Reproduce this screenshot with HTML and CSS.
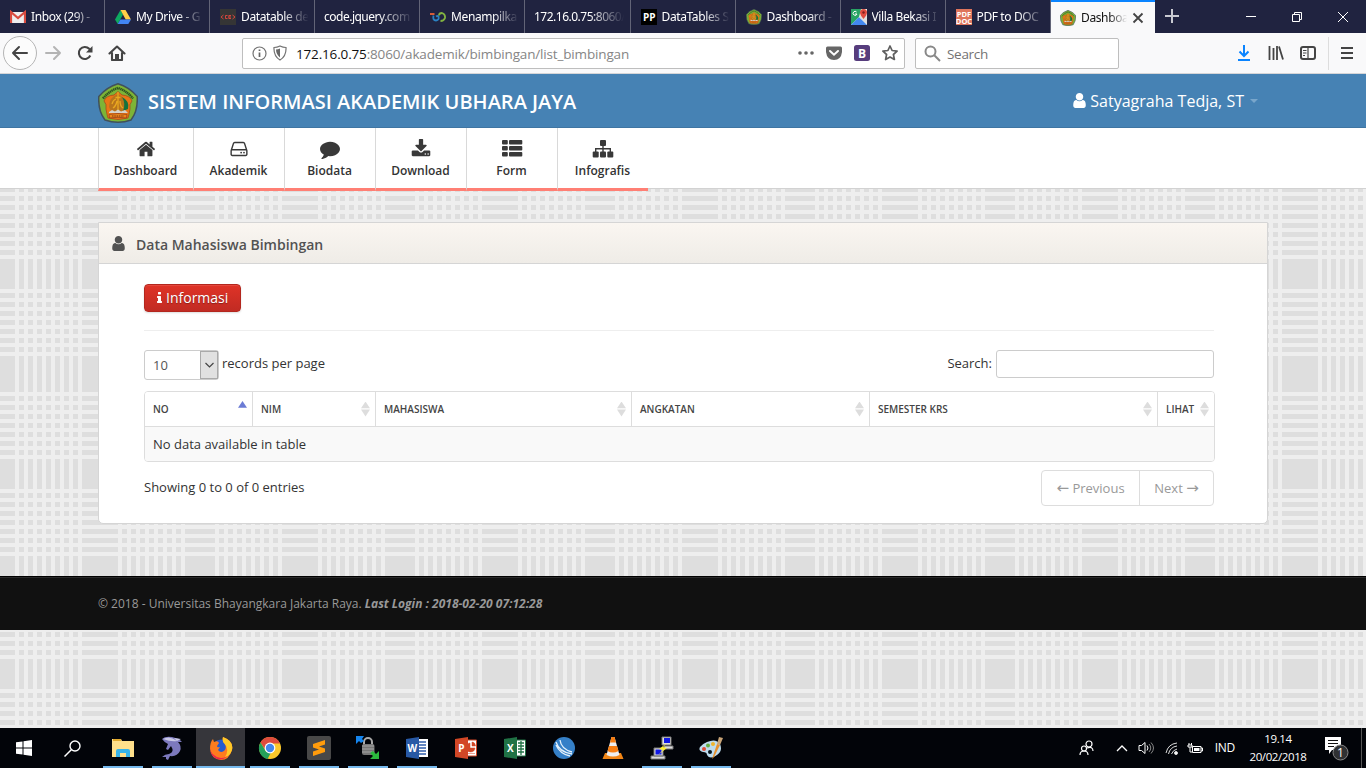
FILE: index.html
```html
<!DOCTYPE html>
<html lang="id">
<head>
<meta charset="utf-8">
<title>Dashboard</title>
<link rel="stylesheet" href="styles.css">
</head>
<body>
<svg class="defs" aria-hidden="true">
  <symbol id="crest" viewBox="0 0 40 40">
    <path d="M20 .8Q31 4 39.200 13.500Q40 28 33 37Q20 41.500 7 37Q0 28 .8 13.500Q9 4 20 .8Z" fill="#7db436" stroke="#41515b" stroke-width="1.500"/>
    <path d="M5 15.500Q11 8 20 5Q29 8 35 15.500" fill="none" stroke="#2d5322" stroke-width="2.400" stroke-dasharray="1.400 .5"/>
    <path d="M20 8.500L24 12Q32 12.500 34 18Q31 21 32 26Q31 32 30 35Q20 38 10 35Q9 32 8 26Q9 21 6 18Q8 12.500 16 12Z" fill="#e87616" stroke="#a6401b" stroke-width=".7"/>
    <path d="M20 11Q11 14 11 24Q13 30 20 30Q28 30 28 23Q27 14 20 11Z" fill="#b8741c"/>
    <path d="M24 14Q32 18 30 26L25 28Q28 21 24 14Z" fill="#16723c"/>
    <path d="M20 9V27M17.500 14.500H22.500M14 21Q15 17 18 16M15 25Q18 23 19 18M22 18Q22 23 25 25" fill="none" stroke="#e9a820" stroke-width="1.300"/>
    <path d="M11 29L14 27L17 28.500L20 26.500L23 28.500L27 27L30 30H11Z" fill="#d6d2c9"/>
    <path d="M11 31.500Q20 29.500 29 31.500L28.500 35Q20 33.500 11.500 35Z" fill="#ec8619" stroke="#98401c" stroke-width=".8"/>
    <path d="M14 33H26" stroke="#7d3416" stroke-width="1.200" stroke-dasharray="1.500 .8"/>
  </symbol>
  <symbol id="user" viewBox="256 128 1280 1536"><path d="M1536 1399q0 109-62.500 187t-150.500 78h-854q-88 0-150.500-78t-62.500-187q0-85 8.500-160.500t31.500-152 58.500-131 94-89 134.500-34.500q131 128 313 128t313-128q76 0 134.500 34.500t94 89 58.500 131 31.500 152 8.500 160.500zm-256-887q0 159-112.500 271.500t-271.500 112.500-271.500-112.500-112.500-271.500 112.500-271.500 271.500-112.500 271.500 112.500 112.500 271.500z"/></symbol>
  <symbol id="loop" viewBox="0 0 16 16"><path d="M0 5H4.500" stroke="#ed6438" stroke-width="1.800"/><path d="M3.500 6.500Q2.500 11.500 6 11.500Q9.500 11 8.500 7.500Q7.500 6.500 6 7.500" fill="none" stroke="#2b82c3" stroke-width="1.800"/><path d="M9 6.500Q9 4 12 4Q15.500 5 15 9Q14 12 10.500 12" fill="none" stroke="#82b341" stroke-width="1.800"/></symbol>
</svg>

<div class="tabs">
  <div class="tab"><svg viewBox="0 0 16 16"><path d="M1 3h14v11H1z" fill="#eee"/><path d="M1 14V3l7 6 7-6v11" fill="none" stroke="#d84b3f" stroke-width="2.200"/></svg><span>Inbox (29) -</span></div>
  <div class="tab"><svg viewBox="0 0 16 16"><path d="M5.500 1L0 10.500 2.700 15 8 5.500z" fill="#0da960"/><path d="M5.500 1h5L16 10.500h-5.300z" fill="#ffcf48"/><path d="M5.300 10.500H16L13.300 15H2.700z" fill="#4285f4"/></svg><span>My Drive - G</span></div>
  <div class="tab"><svg viewBox="0 0 16 16"><path d="M0 0h16v16H0z" fill="#353535"/><path d="M3.500 6L1 8l2.500 2M12.500 6L15 8l-2.500 2M7.500 6.500H5.500v3h2M11 6.500H8.800v3H11M9 8h2" fill="none" stroke="#d2463e"/></svg><span>Datatable de</span></div>
  <div class="tab noicon"><span>code.jquery.com</span></div>
  <div class="tab"><svg><use href="#loop"/></svg><span>Menampilka</span></div>
  <div class="tab noicon wide"><span>172.16.0.75:8060/</span></div>
  <div class="tab"><svg viewBox="0 0 16 16"><path d="M0 0h16v16H0z" fill="#000"/><text x="8.200" y="12" text-anchor="middle" class="pp">PP</text></svg><span>DataTables S</span></div>
  <div class="tab"><svg><use href="#crest"/></svg><span>Dashboard -</span></div>
  <div class="tab"><svg viewBox="0 0 16 16"><path d="M0 0h16v16H0z" fill="#f1f0e7"/><path d="M0 0h10L8 8l-8 8z" fill="#28a464"/><path d="M0 16L8 8l8 8z" fill="#4388ef"/><path d="M8 8l5-5 3 3v9z" fill="#ddd"/><path d="M12.500 10Q9 6 9 3.500a3.500 3.500 0 0 1 7 0Q16 6 12.500 10Z" fill="#df4b40"/><circle cx="12.500" cy="3.500" r="1.200" fill="#7d2020"/><path d="M5.600 3A2 2 0 1 0 6 5H4" fill="none" stroke="#fff"/></svg><span>Villa Bekasi I</span></div>
  <div class="tab wide"><svg viewBox="0 0 16 16"><path d="M0 0h16v16H0z" fill="#df755c"/><text x="8" y="7.500" text-anchor="middle" class="pdf">PDF</text><text x="8" y="15" text-anchor="middle" class="pdf">DOC</text></svg><span>PDF to DOC</span></div>
  <div class="tab active"><svg><use href="#crest"/></svg><span>Dashboa</span><svg class="close" viewBox="0 0 12 12"><path d="M1.500 1.500l9 9m0-9l-9 9" stroke="#444" stroke-width="1.800"/></svg></div>
  <svg class="plus" viewBox="0 0 16 16"><path d="M8 1v14M1 8h14" stroke="#c9cad2" stroke-width="2"/></svg>
  <div class="window-buttons">
    <svg viewBox="0 0 12 12"><path d="M1 5.500h10" stroke="#fff"/></svg>
    <svg viewBox="0 0 12 12"><path d="M1.500 3.500h7v7h-7zM3.500 3V1.500h7v7H9" fill="none" stroke="#fff"/></svg>
    <svg viewBox="0 0 12 12"><path d="M1 1l10 10m0-10L1 11" stroke="#fff"/></svg>
  </div>
</div>

<div class="toolbar">
  <div class="back"><svg width="18" height="16" viewBox="0 0 18 16" fill="none" stroke="#444" stroke-width="2" stroke-linecap="round" stroke-linejoin="round"><path d="M16 8H2m6-6L2 8l6 6"/></svg></div>
  <svg class="fwd" width="18" height="16" viewBox="0 0 18 16" fill="none" stroke="#b4b4b4" stroke-width="2" stroke-linecap="round" stroke-linejoin="round"><path d="M2 8h14m-6-6l6 6-6 6"/></svg>
  <svg class="reload" width="16" height="16" viewBox="0 0 16 16"><path d="M13.300 10.500A6 6 0 1 1 12.200 3.800L14 5.500" fill="none" stroke="#444" stroke-width="2.100"/><path d="M15.500 1v6.500H9z" fill="#444"/></svg>
  <svg class="home" width="18" height="16" viewBox="0 0 18 16"><path d="M1.500 8.500L9 1.500l7.500 7M4 8v7h10V8" fill="none" stroke="#444" stroke-width="2.100" stroke-linejoin="round" stroke-linecap="round"/><path d="M7 9h4v6H7z" fill="#444"/></svg>
  <div class="url">
    <svg width="15" height="15" viewBox="0 0 15 15"><circle cx="7.500" cy="7.500" r="6.500" fill="none" stroke="#737373" stroke-width="1.200"/><path d="M7.500 6.500V11M7.500 3.600v1.500" stroke="#666" stroke-width="1.700"/></svg>
    <svg class="shield" width="14" height="16" viewBox="0 0 14 16"><path d="M7 1Q10 2.500 13 2.500Q13.500 11 7 15Q.5 11 1 2.500Q4 2.500 7 1Z" fill="none" stroke="#737373" stroke-width="1.200"/><path d="M7 3.500V12.500Q3 9 3 4.500Q5 4.500 7 3.500Z" fill="#686868"/></svg>
    <span class="address"><b>172.16.0.75</b>:8060/akademik/bimbingan/list_bimbingan</span>
    <svg width="16" height="16" viewBox="0 0 16 16" fill="#666"><circle cx="2" cy="8" r="1.800"/><circle cx="8" cy="8" r="1.800"/><circle cx="14" cy="8" r="1.800"/></svg>
    <svg width="16" height="16" viewBox="0 0 16 16"><path d="M1.500 1.500h13Q16 1.500 16 3v4Q15 15 8 15Q1 15 0 7V3Q0 1.500 1.500 1.500Z" fill="#666"/><path d="M4 6l4 3.700L12 6" fill="none" stroke="#fff" stroke-width="2" stroke-linecap="round"/></svg>
    <svg width="16" height="16" viewBox="0 0 16 16"><rect width="16" height="16" rx="2.500" fill="#573d7d"/><text x="8" y="12.500" text-anchor="middle" class="bs">B</text></svg>
    <svg width="16" height="16" viewBox="0 0 16 16"><path d="M8 1l2.100 4.500 5 .6-3.700 3.400 1 5L8 12l-4.400 2.500 1-5L.9 6.100l5-.6z" fill="none" stroke="#5f5f5f" stroke-width="1.700" stroke-linejoin="round"/></svg>
  </div>
  <div class="search-box"><svg width="17" height="17" viewBox="0 0 17 17"><circle cx="6.500" cy="6.500" r="5" fill="none" stroke="#888" stroke-width="2"/><path d="M10.300 10.300L16 16" stroke="#888" stroke-width="2"/></svg><span>Search</span></div>
  <div class="tools">
    <svg width="14" height="16" viewBox="0 0 14 16"><path d="M7 0v11M2.500 6.500L7 11l4.500-4.500M1 15h12" fill="none" stroke="#0a84ff" stroke-width="2"/></svg>
    <svg width="16" height="16" viewBox="0 0 16 16"><path d="M1.500 1v14M5.500 3v12M9 1v14M11 1.500L15 14.500" stroke="#444" stroke-width="1.800" fill="none"/></svg>
    <svg width="16" height="16" viewBox="0 0 16 16"><rect x="1" y="2" width="14" height="12" rx="2" fill="none" stroke="#444" stroke-width="2"/><path d="M8 2v12M3 5.500h3.500M3 8h3.500M3 10.500h2" stroke="#444" stroke-width="1.200"/></svg>
    <i></i>
    <svg width="12" height="16" viewBox="0 0 12 16"><path d="M0 3h12M0 8h12M0 13h12" stroke="#444" stroke-width="2"/></svg>
  </div>
</div>

<div class="page">
  <header class="navbar"><div class="container navbar-inner">
    <svg class="logo"><use href="#crest"/></svg><h1>SISTEM INFORMASI AKADEMIK UBHARA JAYA</h1>
    <div class="account"><svg><use href="#user"/></svg>Satyagraha Tedja, ST<i class="caret"></i></div>
  </div></header>
  <nav class="subnav"><ul class="container">
    <li class="first"><svg viewBox="0 0 1792 1792"><path d="M1472 992v480q0 26-19 45t-45 19h-384v-384h-256v384h-384q-26 0-45-19t-19-45v-480q0-1 .5-3t.5-3l575-474 575 474q1 2 1 6zm223-69l-62 74q-8 9-21 11h-3q-13 0-21-7l-692-577-692 577q-12 8-24 7-13-2-21-11l-62-74q-8-10-7-23.500t11-21.500l719-599q32-26 76-26t76 26l244 204v-195q0-14 9-23t23-9h192q14 0 23 9t9 23v408l219 182q10 8 11 21.500t-7 23.500z"/></svg>Dashboard</li>
    <li><svg viewBox="0 0 1792 1792"><path d="M1168 1216q0 33-23.500 56.500t-56.500 23.500-56.500-23.500-23.500-56.500 23.500-56.500 56.500-23.500 56.500 23.500 23.500 56.500zm256 0q0 33-23.500 56.500t-56.500 23.500-56.500-23.500-23.500-56.500 23.500-56.500 56.500-23.500 56.500 23.500 23.500 56.500zm112 160v-320q0-13-9.500-22.500t-22.500-9.500h-1216q-13 0-22.500 9.500t-9.500 22.500v320q0 13 9.500 22.500t22.500 9.500h1216q13 0 22.500-9.500t9.500-22.500zm-1230-480h1180l-157-482q-4-13-16-21.500t-26-8.500h-782q-14 0-26 8.500t-16 21.500zm1358 160v320q0 66-47 113t-113 47h-1216q-66 0-113-47t-47-113v-320q0-25 16-75l197-606q17-53 63-86t101-33h782q55 0 101 33t63 86l197 606q16 50 16 75z"/></svg>Akademik</li>
    <li><svg viewBox="0 0 1792 1792"><path d="M1792 896q0 174-120 321.500t-326 233-450 85.500q-70 0-145-8-198 175-460 242-49 14-114 22-17 2-30.500-9t-17.500-29v-1q-3-4-.5-12t2-10 4.500-9.500l6-9 7-8.500 8-9q7-8 31-34.500t34.500-38 31-39.500 32.500-51 27-59 26-76q-157-89-247.500-220t-90.500-281q0-130 71-248.500t191-204.500 286-136.500 348-50.500q244 0 450 85.500t326 233 120 321.500z"/></svg>Biodata</li>
    <li><svg viewBox="0 0 1792 1792"><path d="M1344 1344q0-26-19-45t-45-19-45 19-19 45 19 45 45 19 45-19 19-45zm256 0q0-26-19-45t-45-19-45 19-19 45 19 45 45 19 45-19 19-45zm128-224v320q0 40-28 68t-68 28h-1472q-40 0-68-28t-28-68v-320q0-40 28-68t68-28h465l135 136q58 56 136 56t136-56l136-136h464q40 0 68 28t28 68zm-325-569q17 41-14 70l-448 448q-18 19-45 19t-45-19l-448-448q-31-29-14-70 17-39 59-39h256v-448q0-26 19-45t45-19h256q26 0 45 19t19 45v448h256q42 0 59 39z"/></svg>Download</li>
    <li><svg viewBox="0 0 20 20"><g><rect y="1" width="5.800" height="4.500" rx="1"/><rect y="7" width="5.800" height="4.500" rx="1"/><rect y="13" width="5.800" height="4.500" rx="1"/><rect x="7" y="1" width="13.300" height="4.500" rx="1"/><rect x="7" y="7" width="13.300" height="4.500" rx="1"/><rect x="7" y="13" width="13.300" height="4.500" rx="1"/></g></svg>Form</li>
    <li><svg viewBox="0 0 20 20"><rect x="7" y="1" width="6" height="6" rx="1"/><rect x="-.3" y="12.500" width="6" height="6" rx="1"/><rect x="7" y="12.500" width="6" height="6" rx="1"/><rect x="14.300" y="12.500" width="6" height="6" rx="1"/><path d="M10 6v7M2.700 13V9.700h14.600V13" fill="none" stroke="#393939" stroke-width="1.400"/></svg>Infografis</li>
  </ul></nav>

  <main class="container">
    <section class="widget">
      <h3><svg><use href="#user"/></svg>Data Mahasiswa Bimbingan</h3>
      <div class="content">
        <button class="info"><svg viewBox="576 128 640 1408"><path d="M1216 1344v128q0 26-19 45t-45 19h-512q-26 0-45-19t-19-45v-128q0-26 19-45t45-19h64v-384h-64q-26 0-45-19t-19-45v-128q0-26 19-45t45-19h384q26 0 45 19t19 45v576h64q26 0 45 19t19 45zm-128-1152v192q0 26-19 45t-45 19h-256q-26 0-45-19t-19-45v-192q0-26 19-45t45-19h256q26 0 45 19t19 45z"/></svg>Informasi</button>
        <hr>
        <div class="controls">
          <div class="length"><div class="select">10<i><svg width="9" height="6" viewBox="0 0 9 6"><path d="M.5 1l4 4 4-4" fill="none" stroke="#444" stroke-width="1.200"/></svg></i></div>records per page</div>
          <label>Search:<input type="text"></label>
        </div>
        <div class="table">
          <div class="head">
            <span class="asc">NO<i></i></span><span>NIM<i></i></span><span>MAHASISWA<i></i></span><span>ANGKATAN<i></i></span><span>SEMESTER KRS<i></i></span><span>LIHAT<i></i></span>
          </div>
          <div class="empty">No data available in table</div>
        </div>
        <div class="bottom"><span>Showing 0 to 0 of 0 entries</span><div class="pager"><span class="prev"><em>←</em> Previous</span><span>Next <em>→</em></span></div></div>
      </div>
    </section>
  </main>
  <footer><div class="container">© 2018 - Universitas Bhayangkara Jakarta Raya. <b>Last Login : 2018-02-20 07:12:28</b></div></footer>
</div>

<div class="taskbar">
  <div class="start"><svg width="16" height="16" viewBox="0 0 16 16" fill="#fff"><path d="M0 2.300L6.500 1.400V7.500H0zM7.500 1.200L16 0v7.500H7.500zM0 8.500h6.500v6.100L0 13.700zM7.500 8.500H16V16l-8.500-1.200z"/></svg></div>
  <div class="start"><svg width="17" height="17" viewBox="0 0 17 17"><circle cx="11" cy="6" r="5" fill="none" stroke="#fff" stroke-width="1.400"/><path d="M7.500 9.500L.5 16.500" stroke="#fff" stroke-width="1.500"/></svg></div>
  <div class="apps">
    <div class="app on"><svg viewBox="0 0 24 24"><path d="M1 3h9l1 2h12v16H1z" fill="#ffe08b"/><path d="M2 3h8v2H2z" fill="#e2aa2e"/><path d="M5 21v-6q0-2 2-2h10q2 0 2 2v6h-4v-4H9v4z" fill="#38b3e8"/></svg></div>
    <div class="app on"><svg viewBox="0 0 24 24"><path d="M2 3Q5 0 12 1L19 3 22 6 18 6Q22 10 20 15Q17 21 10 20L8 24 6 23 6 21 2 21Q5 18 9 18Q15 16 11 10L8 14 6 13 8 8Q4 6 2 3Z" fill="#7c79bd"/><path d="M3 3Q10 -1 17 5Q11 6 3 3M14 2l7 1-4 2z" fill="#c9c9e6"/></svg></div>
    <div class="app on current"><svg viewBox="0 0 24 24"><circle cx="12" cy="12.500" r="9" fill="#245bd0"/><path d="M14 1Q25 5 23 14Q20 24 12 24Q2 23 1 13Q1 6 4 3L5 6Q9 4 10 7L8 10Q8 12 11 11L9 14Q12 18 16 14Q18 10 15 7Q13 5 14 1Z" fill="#ff7c1e"/><path d="M14 1Q25 5 23 14Q21 20 16 21Q21 13 15 7Q13 5 14 1Z" fill="#ffc928"/><path d="M1 11Q1 20 12 22Q18 22 20 18Q16 25 8 23Q1 20 1 11Z" fill="#ed2748"/></svg></div>
    <div class="app on"><svg viewBox="0 0 24 24"><circle cx="12" cy="12" r="11" fill="#fbc82b"/><path d="M2.500 6.500A11 11 0 0 1 22 7.500H12L7.500 14z" fill="#de4b3d"/><path d="M2.500 6.500L8 15.500l5 1L9.500 23A11 11 0 0 1 2.500 6.500Z" fill="#24a05a"/><circle cx="12" cy="12" r="5.400" fill="#fff"/><circle cx="12" cy="12" r="4.200" fill="#4387ed"/></svg></div>
    <div class="app on"><svg viewBox="0 0 24 24"><rect width="24" height="24" rx="2" fill="#484848"/><path d="M6 8l12-4v4.500l-6 2 6 2V16L6 20v-4.500l6-2-6-2z" fill="#ff9c0c"/></svg></div>
    <div class="app on"><svg viewBox="0 0 24 24"><path d="M8 9V6a4 4 0 0 1 8 0v3" fill="none" stroke="#aaa" stroke-width="2"/><rect x="6" y="8" width="12.500" height="11" rx="2" fill="#777"/><path d="M6 10h12M6 13h12M6 16h12" stroke="#a6a6a6"/><path d="M0 0h8L6 3l2 2-3 2-2-2-3 3z" fill="#1585ee"/><path d="M23 23h-9l3-3-3-3 3-2 3 3 3-3z" fill="#2bba3d"/></svg></div>
    <div class="app on"><svg viewBox="0 0 24 24"><path d="M12 3h11v18H12z" fill="#fff"/><path d="M14 6h7M14 9h7M14 12h7M14 15h7M14 18h7" stroke="#315daa" stroke-width="1.300"/><path d="M1 3l13-2v22L1 21z" fill="#2859a5"/><text x="7.300" y="16" text-anchor="middle" class="office">W</text></svg></div>
    <div class="app"><svg viewBox="0 0 24 24"><path d="M12 4h10.500v16H12z" fill="#fff" stroke="#d24726"/><path d="M16 7v5h5a4.500 4.500 0 1 1-5-5M18 6v4h3.500Q21 6 18 6M14 17.500h7" fill="#d24726" stroke="#d24726" stroke-width=".5"/><path d="M1 3l13-2v22L1 21z" fill="#d24726"/><text x="7.300" y="16" text-anchor="middle" class="office">P</text></svg></div>
    <div class="app"><svg viewBox="0 0 24 24"><path d="M12 4h10.500v16H12z" fill="#fff" stroke="#207245"/><path d="M15 7h6M15 10h6M15 13h6M15 16h6M18 5v14" stroke="#207245" stroke-width="1.300"/><path d="M1 3l13-2v22L1 21z" fill="#207245"/><text x="7.300" y="16" text-anchor="middle" class="office">X</text></svg></div>
    <div class="app"><svg viewBox="0 0 24 24"><circle cx="12" cy="12" r="11" fill="#3580c8"/><path d="M4 6Q7 16 20 18M8 4Q9 13 20 16M4 9Q8 18 18 20" fill="none" stroke="#e4f1fb" stroke-width="1.300"/></svg></div>
    <div class="app"><svg viewBox="0 0 24 24"><path d="M4 17h16l2.500 6h-21z" fill="#f18515"/><path d="M10.500 1h3l5 18q-6.500 3-13 0z" fill="#eee"/><path d="M10.500 1h3l1.500 5.500H9zM8 10h8l1.500 5Q12 18 6.500 15z" fill="#f77d10"/></svg></div>
    <div class="app on"><svg viewBox="0 0 24 24"><g stroke="#777" fill="#ddd"><path d="M12 1h9v8h-9zM14 10h9v3h-9zM4 12h9v8H4zM1 20h14v3H1z"/></g><path d="M14 2h6v5h-6zM5.500 13.500h6v5h-6z" fill="#1018e4"/><path d="M17 7l-8 6 4 1-5 5 9-7-4-1z" fill="#fff035"/></svg></div>
    <div class="app on"><svg viewBox="0 0 24 24"><path d="M8 6Q17 2 21 8Q24 15 18 19Q11 24 8 19Q8 16 4 16Q-1 15 1 11Q3 8 8 6Z" fill="#bddbed"/><circle cx="11" cy="16" r="2" fill="#07131c"/><circle cx="5" cy="13" r="2" fill="#de4d39"/><circle cx="9" cy="9.500" r="2" fill="#64ae43"/><circle cx="14" cy="8" r="2" fill="#f0b42c"/><path d="M13 23L18 8l3 1-6 12z" fill="#e9902b"/><path d="M18 8l2-7 4 1-3 7z" fill="#c9a477"/></svg></div>
  </div>
  <div class="tray">
    <svg width="15" height="16" viewBox="0 0 15 16" fill="none" stroke="#fff" stroke-width="1.200"><circle cx="10" cy="4" r="3"/><circle cx="5" cy="8.500" r="2.500"/><path d="M1 15q0-4 4-4t4 4M8 8q6-2 6 3"/></svg>
    <svg class="chevron" width="12" height="8" viewBox="0 0 12 8"><path d="M1 7l5-5 5 5" fill="none" stroke="#fff" stroke-width="1.300"/></svg>
    <svg class="sound" width="17" height="14" viewBox="0 0 17 14" fill="none" stroke="#fff"><path d="M1 4.500h2.500L7 1.500v11L3.500 9.500H1z"/><path d="M9 4.500q2 2.500 0 5"/><path d="M11 3q3.500 4 0 8M13 1.500q5 5.500 0 11" stroke="#888"/></svg>
    <svg class="wifi" width="13" height="13" viewBox="0 0 13 13" fill="none" stroke="#ddd"><path d="M1 11Q3 2 12 1M3.500 12Q5 5 12 4M6.500 12Q8 8 12 7"/><circle cx="11" cy="11" r="1.500" fill="#fff"/></svg>
    <svg class="battery" width="16" height="13" viewBox="0 0 16 13"><path d="M5.500 4.500h8.500v6H5.500zM14 6h1.500v3H14" fill="none" stroke="#fff"/><path d="M7 6h5.500v3H7z" fill="#fff"/><path d="M1 3h4v2H1zM2 1v2M4.500 1v2M3 5v5h2" fill="none" stroke="#fff"/></svg>
    <span class="lang">IND</span>
    <div class="clock"><span>19.14</span><span>20/02/2018</span></div>
    <svg class="notice" width="25" height="25" viewBox="0 0 25 25"><path d="M1 1h16v13H8l-3 4v-4H1z" fill="#fff"/><path d="M4 4.500h10M4 7.500h10M4 10.500h6" stroke="#111"/><circle cx="16.500" cy="16.500" r="7.500" fill="#303133" stroke="#888"/><text x="16.500" y="21" text-anchor="middle" class="badge">1</text></svg>
  </div>
</div>
</body>
</html>
```
FILE: styles.css
```css
*{box-sizing:border-box}
body{margin:0;width:1366px;height:768px;overflow:hidden;display:flex;flex-direction:column;font-family:"Open Sans",sans-serif;font-size:13px;line-height:18px;color:#333}
svg{display:block;flex:none}
.defs{position:absolute;width:0;height:0}
.tabs{height:33px;background:#202340;display:flex;flex:none;color:#fff;font-family:"Noto Sans","Open Sans",sans-serif;font-size:12px;letter-spacing:-.35px}
.tab{width:105px;border-right:1px solid #626477;display:flex;align-items:center;padding:0 4px 0 10px;white-space:nowrap}
.tab.noicon{padding-left:9px}
.tab.noicon span{letter-spacing:-.5px}
.tab.wide{width:105.500px}
.tab svg{width:16px;height:16px;margin-right:5px}
.tab span{flex:1;min-width:0;overflow:visible;-webkit-mask-image:linear-gradient(90deg,#000 60%,transparent 98%);mask-image:linear-gradient(90deg,#000 60%,transparent 98%)}
.tab:not(.noicon) span{letter-spacing:-.38px}
.tab.active{background:#f9f9fa;color:#111;border-top:2px solid #0a84ff;border-right:0;padding-left:9px;width:104px}
.tab.active .close{width:12px;height:12px;margin:0 7px 0 4px}
.pp{font:bold 10px "Open Sans",sans-serif;fill:#fff;letter-spacing:0}
.pdf{font:bold 7.500px "Open Sans",sans-serif;fill:#fff;letter-spacing:0}
.plus{width:16px;height:16px;margin:8px 0 0 9px}
.window-buttons{display:flex;gap:34px;margin:11px 17px 0 auto}
.window-buttons svg{width:12px;height:12px}
.toolbar{height:41px;background:#f9f9fa;border-bottom:1px solid #d5d5d7;display:flex;align-items:center;flex:none;padding:0 13px 0 3px}
.back{width:34px;height:34px;border:1px solid #b5b5b5;border-radius:50%;display:grid;place-items:center;background:#fcfcfc}
.fwd{margin-left:7px}
.reload{margin-left:15px}
.home{margin-left:15px}
.url,.search-box{height:31px;border:1px solid #bebebe;border-radius:2px;background:#fff;display:flex;align-items:center;font-size:14px}
.url{width:663px;margin-left:116px;padding:0 6px 0 9px;gap:12px}
.shield{margin-left:-6px}
.address{flex:1;margin-left:-3px;color:#858585;font-size:13.500px;letter-spacing:-.16px;white-space:nowrap;padding-top:2px}
.address b{font-weight:400;color:#111}
.bs{font:bold 12px "Open Sans",sans-serif;fill:#fff}
.search-box{width:204px;margin-left:10px;padding-left:8px;gap:6px;color:#737373;font-size:13.500px;letter-spacing:-.3px}
.search-box span{padding-top:2px}
.tools{display:flex;align-items:center;margin-left:auto;gap:16px}
.tools svg:first-child{margin-right:1px}
.tools i{width:1px;height:33px;background:#ddd;margin:0 -4px 0 -4px}
.page{height:654px;flex:none;background-color:#dedede;
 background-image:linear-gradient(90deg,transparent 15px,#eee 15px 19px,transparent 19px 24px,#eee 24px 28px,transparent 28px 33px,#eee 33px 37px,transparent 37px 42px,#eee 42px 46px,transparent 46px 51px,#eee 51px 55px,transparent 55px 60px,#eee 60px 64px,transparent 64px 69px,#eee 69px 73px,transparent 73px 78px,#eee 78px 82px,transparent 82px 118px,#eee 118px 122px,transparent 122px 127px,#eee 127px 131px,transparent 131px 136px,#eee 136px 140px,transparent 140px 145px,#eee 145px 149px,transparent 149px 154px,#eee 154px 158px,transparent 158px 163px,#eee 163px 167px,transparent 167px 172px,#eee 172px 176px,transparent 176px 181px,#eee 181px 185px,transparent 185px),
 linear-gradient(180deg,transparent 15px,#eee 15px 19px,transparent 19px 24px,#eee 24px 28px,transparent 28px 33px,#eee 33px 37px,transparent 37px 42px,#eee 42px 46px,transparent 46px 51px,#eee 51px 55px,transparent 55px 60px,#eee 60px 64px,transparent 64px 69px,#eee 69px 73px,transparent 73px 78px,#eee 78px 82px,transparent 82px 118px,#eee 118px 122px,transparent 122px 127px,#eee 127px 131px,transparent 131px 136px,#eee 136px 140px,transparent 140px 145px,#eee 145px 149px,transparent 149px 154px,#eee 154px 158px,transparent 158px 163px,#eee 163px 167px,transparent 167px 172px,#eee 172px 176px,transparent 176px 181px,#eee 181px 185px,transparent 185px);
 background-size:200px 200px}
.container{width:1170px;margin:0 auto}
.navbar{height:54px;background:#4682b4;border-bottom:1px solid #3f75a2}
.navbar-inner{display:flex;align-items:center;height:53px;color:#fff}
.logo{width:40px;height:40px;margin-top:5px}
h1{font-size:20px;font-weight:600;line-height:24px;margin:3px 0 0 10px;white-space:nowrap}
.account{margin-left:auto;margin-right:10px;display:flex;align-items:center;font-size:16px}
.account svg{width:13px;height:15px;fill:#fff;margin-right:4px}
.caret{border:4px solid transparent;border-top-color:#79a6cb;border-bottom:0;margin-left:6px}
.subnav{height:61px;background:#fff;border-bottom:1px solid #d2d2d2}
.subnav ul{list-style:none;padding:0;display:flex;height:63px}
.subnav li{width:91px;border-left:1px solid #d9d9d9;border-bottom:3px solid #ff7f74;display:flex;flex-direction:column;align-items:center;font-size:12px;font-weight:600;color:#333;padding:11px 1px 0 0;line-height:18px}
.subnav li.first{width:95px}
.subnav li svg{width:20px;height:20px;fill:#393939;margin-bottom:3px;overflow:visible}
.widget{margin-top:33px;height:302px;border:1px solid #d5d5d5;border-radius:0 0 5px 5px;background:#fff}
h3{margin:0;height:41px;background:linear-gradient(#faf6f1,#efece7);border-bottom:1px solid #d5d5d5;font-size:14px;font-weight:600;color:#525252;display:flex;align-items:center;padding:3px 0 0 13px}
h3 svg{width:13px;height:15px;fill:#525252;margin:-2px 11px 0 0}
.content{padding:20px 53px 0 45px}
.info{height:28px;width:97px;border:1px solid #b3271e;border-radius:4px;background:linear-gradient(#df3327,#c12b23);color:#fff;font:14px "Open Sans",sans-serif;display:flex;align-items:center;padding:0 0 2px 12px;text-shadow:0 1px 1px #0005;box-shadow:inset 0 1px #e4483d,0 1px 2px #0002}
.info svg{width:5px;height:11px;fill:#fff;margin-right:4px}
hr{border:0;border-top:1px solid #eee;margin:18px 0 19px}
.controls{display:flex;justify-content:space-between;height:30px}
.length,.controls label{display:flex;align-items:center;padding-bottom:5px}
.select{width:75px;height:30px;border:1px solid #ccc;border-radius:3px;display:flex;align-items:center;justify-content:space-between;padding-left:8px;margin:5px 3px 0 0;color:#555}
.select i{width:18px;height:28px;border:1px solid #aaa;background:#e1e1e1;display:grid;place-items:center}
.controls input{width:218px;height:28px;border:1px solid #ccc;border-radius:3px;background:#fff;margin:3px 0 0 4px}
.table{width:1071px;height:71px;margin-top:11px;border:1px solid #ddd;border-radius:4px;overflow:hidden}
.head{height:34px;display:grid;grid-template-columns:107px 123px 256px 238px 288px 57px;font-size:10px;font-weight:600;color:#444;background:#fff}
.head span{display:flex;align-items:center;justify-content:space-between;padding:0 5px 0 8px;border-left:1px solid #ddd;white-space:nowrap}
.head .asc{border-left:0}
.head i{width:9px;height:15px;background:linear-gradient(#ddd,#ddd);clip-path:polygon(50% 0,100% 45%,0 45%,0 54%,100% 54%,50% 100%,0 54%,0 45%)}
.head .asc i{background:#6b7bd5;clip-path:polygon(50% 0,100% 45%,0 45%);margin-top:-1px}
.empty{height:35px;border-top:1px solid #ddd;background:#f9f9f9;padding:8px}
.bottom{display:flex;justify-content:space-between;margin-top:8px}
.bottom>span{padding-top:8px}
.pager{height:36px;width:173px;border:1px solid #ddd;border-radius:4px;display:flex;color:#999}
.pager span{flex:1;padding-top:8px;text-align:center;white-space:nowrap}
.pager .prev{flex:0 0 98px;border-right:1px solid #ddd}
.pager em{font:15px/14px "DejaVu Sans",sans-serif}
footer{margin-top:52px;height:54px;background:#111;border-top:1px solid #000;box-shadow:inset 0 1px #292929;font-size:12px;color:#999;padding-top:18px}
footer b{font-style:italic}
.taskbar{height:40px;background:#020409;display:flex;flex:none;align-items:center;color:#fff}
.start{width:48px;display:grid;place-items:center}
.apps{display:flex;padding-left:2px}
.app{width:49px;height:40px;display:grid;place-items:center;background:linear-gradient(#76b9ed,#76b9ed) center bottom/0 2px no-repeat}
.app svg{width:24px;height:24px}
.app.on{background-size:40px 2px}
.app.current{background-color:#36363b;background-size:49px 2px}
.office{font:bold 10px "Open Sans",sans-serif;fill:#fff}
.tray{height:40px;margin-left:auto;margin-right:4px;padding-right:12px;border-right:1px solid #555;display:flex;align-items:center}
.chevron{margin-left:22px}
.sound{margin-left:10px}
.wifi{margin-left:10px}
.battery{margin-left:9px}
.lang{margin-left:12px;font-size:12px;letter-spacing:-.3px}
.clock{width:66px;margin-left:10px;display:flex;flex-direction:column;align-items:center;font-size:11.500px;letter-spacing:-.4px;line-height:18px}
.notice{margin-left:13px}
.badge{font:12px "Open Sans",sans-serif;fill:#fff}
```
